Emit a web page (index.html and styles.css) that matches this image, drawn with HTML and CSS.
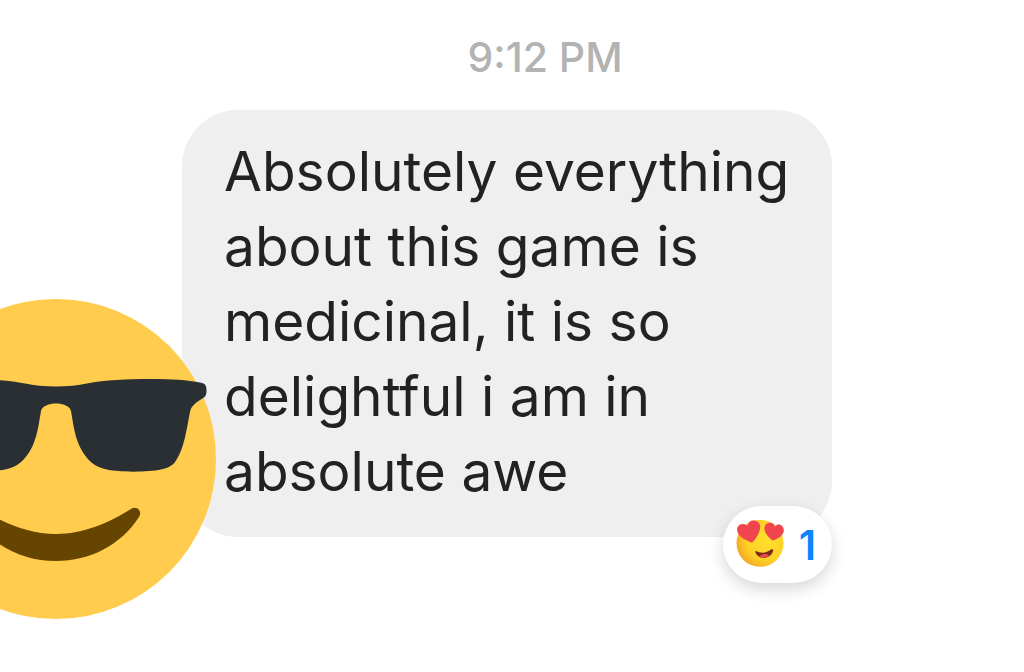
FILE: index.html
```html
<!DOCTYPE html>
<html lang="en">
<head>
<meta charset="utf-8">
<meta name="viewport" content="width=device-width, initial-scale=1">
<title>Message</title>
<link rel="stylesheet" href="styles.css">
</head>
<body>
<main class="thread">
  <time class="timestamp" datetime="21:12">9:12 PM</time>
  <article class="message">
    <p class="bubble">Absolutely everything about this game is medicinal, it is so delightful i am in absolute awe</p>
    <svg class="avatar" viewBox="0 0 320 320" role="img" aria-label="Smiling face with sunglasses">
      <circle cx="160" cy="160" r="160" fill="#ffcc4d"/>
      <path fill="#664500" d="M160 235C187 235 213 224 235 210C240 206 247 212 243 218C225 246 194 262 160 262C126 262 95 246 77 218C73 212 80 206 85 210C107 224 133 235 160 235Z"/>
      <path fill="#292f33" d="M160 87.500C172 87.500 182 86.500 191 84.500C209 81 231 80 254 80C276 80 292 81 304 83.500C310 84.500 310.500 87 310.500 92C310.500 97 309 98 304 101C298 105 295 108 294 113C291 128 289 143 284 154C279 165 276 168 265 170.500C250 173.500 220 173.500 207 169.500C195 166 188 157 183 146C178 134 177 123 175 112C174 107 167 104.500 160 104.500C153 104.500 146 107 145 112C143 123 142 134 137 146C132 157 125 166 113 169.500C100 173.500 70 173.500 55 170.500C44 168 41 165 36 154C31 143 29 128 26 113C25 108 22 105 16 101C11 98 9.500 97 9.500 92C9.500 87 10 84.500 16 83.500C28 81 44 80 66 80C89 80 111 81 129 84.500C138 86.500 148 87.500 160 87.500Z"/>
    </svg>
    <button class="reaction" type="button" aria-label="1 heart eyes reaction">
      <svg class="reaction-icon" viewBox="0 0 48 48" aria-hidden="true">
        <defs>
          <radialGradient id="face" cx="0.66" cy="0.4" r="0.7">
            <stop offset="0" stop-color="#ffe02e"/>
            <stop offset="0.65" stop-color="#fdd026"/>
            <stop offset="1" stop-color="#f3a624"/>
          </radialGradient>
        </defs>
        <circle cx="24" cy="22.300" r="23.500" fill="url(#face)"/>
        <path fill="#7d2a18" d="M20 30C26 33 31 31.500 35 28.500C37 27.500 38 29.500 36.500 31.500C33 39 22 38.500 19.500 31.500Q19 29.500 20 30Z"/>
        <path fill="#e94b4d" d="M23 35.500C26 32.500 31 32.500 33 34.500C30 37 27 37.500 23 35.500Z"/>
        <path fill="#f0444f" d="M16 21.500C10 19.500 3 16 1.500 11C0 6 3 3 6.500 3Q10 3 11.500 5C12 1 15-1 18-.500C23 0 25 4 24 8C22.500 14 19 19 16 21.500Z"/>
        <path fill="#f0444f" d="M36.500 19.500C33 17 29 12.500 28.500 8.500C28 4 31 1.500 34 1.800Q38 2 39 5.500C41 3 44 3 46 5C49.500 9 47.500 13 44 16C41 18 39 19 36.500 19.500Z"/>
      </svg>
      <span class="reaction-count">1</span>
    </button>
  </article>
</main>
</body>
</html>
```
FILE: styles.css
```css
body {
  margin: 0;
  background: #fff;
  color: #222;
  font-family: Inter, Roboto, "Liberation Sans", sans-serif;
}

.thread {
  display: flex;
  flex-direction: column;
  min-height: 100vh;
  box-sizing: border-box;
  padding: 33px 0 40px;
  overflow: hidden;
}

.timestamp {
  margin: 0 0 29px 66px;
  color: #b3b3b3;
  font-size: 41px;
  font-weight: 500;
  line-height: 48px;
  text-align: center;
}

.message {
  position: relative;
  align-self: flex-start;
  max-width: 650px;
  margin: 0 24px 0 182px;
}

.bubble {
  margin: 0;
  padding: 24px 36px 28px 42px;
  border-radius: 56px;
  background: #efefef;
  font-size: 55px;
  line-height: 75px;
}

.avatar {
  position: absolute;
  bottom: -82px;
  left: -286px;
  width: 320px;
  height: 320px;
}

.reaction {
  position: absolute;
  right: 0;
  bottom: -46px;
  display: flex;
  align-items: center;
  gap: 15px;
  height: 77px;
  padding: 0 16px 0 13px;
  border: 0;
  border-radius: 40px;
  background: #fff;
  box-shadow: 0 6px 16px rgba(0, 0, 0, 0.16);
  color: #0a84ff;
  font: inherit;
}

.reaction-icon {
  width: 48px;
  height: 48px;
  overflow: visible;
}

.reaction-count {
  font-size: 41px;
  font-weight: 600;
}
```
